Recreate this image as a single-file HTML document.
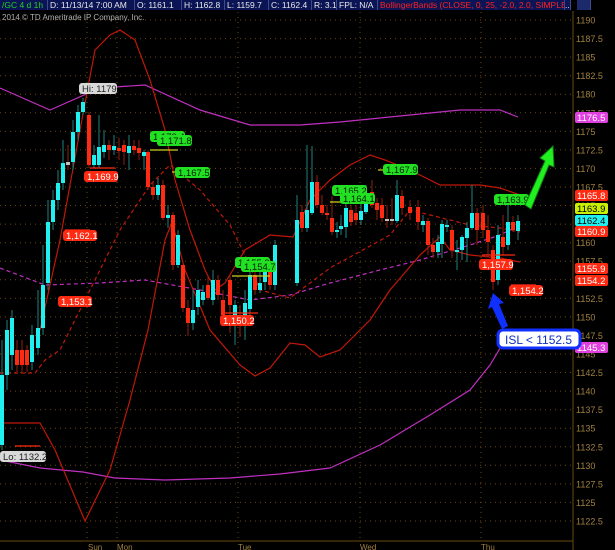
<!DOCTYPE html>
<html><head><meta charset="utf-8"><style>
html,body{margin:0;padding:0;background:#000;width:615px;height:550px;overflow:hidden}
#hdr{position:absolute;left:0;top:0;width:615px;height:11px;background:#000;font:8.5px/11px "Liberation Sans",sans-serif;color:#e8e8e8}
.c{position:absolute;top:0;height:10px;background:#0b1555;border-right:1px solid #3a4a8a;padding-left:2px;white-space:nowrap;overflow:hidden}
svg{position:absolute;left:0;top:0}
</style></head><body>
<svg id="s" width="615" height="550" xmlns="http://www.w3.org/2000/svg"></svg>
<div id="hdr">
<div class="c" style="left:0;width:45px;color:#22d022">/GC 4 d 1h</div>
<div class="c" style="left:48px;width:84px">D: 11/13/14 7:00 AM</div>
<div class="c" style="left:135px;width:44px">O: 1161.1</div>
<div class="c" style="left:182px;width:40px">H: 1162.8</div>
<div class="c" style="left:225px;width:41px">L: 1159.7</div>
<div class="c" style="left:269px;width:40px">C: 1162.4</div>
<div class="c" style="left:312px;width:22px">R: 3.1</div>
<div class="c" style="left:337px;width:38px">FPL: N/A</div>
<div class="c" style="left:378px;width:184px;color:#ff2020">BollingerBands (CLOSE, 0, 25, -2.0, 2.0, SIMPLE)</div>
<div class="c" style="left:565px;width:5px;padding:0">...</div>
<div class="c" style="left:577px;width:13px;padding:0;background:#1a2a6a"></div>
</div>
<script>
const s=document.getElementById('s');let h='';
const Y=p=>20+(1190-p)*7.422;
for(let p=1190;p>=1122.5;p-=2.5){const y=Y(p).toFixed(1);h+=`<line x1="0" y1="${y}" x2="573" y2="${y}" stroke="#6a4a10" stroke-dasharray="1,4"/>`;
h+=`<text x="576" y="${(+y+3.5).toFixed(1)}" fill="#a08040" font-size="9" font-family="Liberation Sans">${p%1?p.toFixed(1):p}</text>`;}
[87,117,238,360,481].forEach(x=>{h+=`<line x1="${x}" y1="12" x2="${x}" y2="541" stroke="#6a4a10" stroke-dasharray="1,4"/>`});
h+=`<line x1="573" y1="11" x2="573" y2="550" stroke="#6a4a10"/><line x1="0" y1="541" x2="573" y2="541" stroke="#6a4a10"/>`;
[[88,'Sun'],[117,'Mon'],[238,'Tue'],[360,'Wed'],[481,'Thu']].forEach(([x,t])=>h+=`<text x="${x}" y="550" fill="#a08040" font-size="8" font-family="Liberation Sans">${t}</text>`);
h+=`<text x="2" y="20" fill="#b0b0b0" font-size="8" font-family="Liberation Sans">2014 © TD Ameritrade IP Company, Inc.</text>`;
const L=(pts,c,w,d)=>h+=`<polyline fill="none" stroke="${c}" stroke-width="${w||1}" ${d?'stroke-dasharray="'+d+'"':''} points="${pts}"/>`;
L('0,88 50,110 100,88 145,85 200,110 250,125 300,125 340,122 380,118 460,110 500,110 518,117','#c030c0',1.2);
L('0,460 40,468 83,472 115,478 165,480 230,478 280,474 330,468 380,445 430,415 470,390 490,365 505,340 520,330','#c030c0',1.2);
L('0,268 45,285 100,283 145,280 200,290 250,300 290,295 330,283 380,270 420,260 470,245 500,235 520,225','#c030c0',1.2,'4,3');
L('0,423 40,423 55,450 85,521 110,470 130,400 148,330 165,240 172,222 185,270 210,330 240,365 255,376 270,368 290,343 305,345 320,357 340,350 370,320 390,290 420,255 440,237 450,250 470,255 500,258 520,262','#c01808',1.2);
L('40,330 60,240 80,130 95,50 110,35 120,30 135,40 150,80 165,130 175,180 190,230 205,270 215,290 225,283 245,250 270,235 293,237 310,200 330,180 350,165 370,155 385,160 410,170 440,185 480,185 500,188 520,195','#c01808',1.2);
L('0,373 35,373 45,360 60,350 90,290 120,230 150,185 170,165 200,190 230,225 245,255 260,290 290,298 330,268 390,235 410,210 430,215 470,225 500,228 520,232','#c01808',1.2,'4,3');
const C=[[2,375,445,'c',340,450],[7,330,375,'c',320,390],[12,318,355,'c',310,370],[17,350,365,'r',340,372],[22,350,365,'r',340,372],[27,350,365,'r',345,372],[32,335,362,'c',325,370],[38,328,348,'c',290,355],[43,285,328,'c',245,335],[48,222,283,'c',200,290],[53,200,222,'c',190,230],[58,183,200,'c',170,210],[63,163,183,'c',140,190],[68,162,165,'w',145,170],[73,132,162,'c',120,170],[78,112,132,'c',105,140],[83,102,112,'c',98,115],[89,115,165,'r',112,168],[94,155,165,'c',145,168],[99,147,165,'c',115,168],[104,145,152,'c',130,158],[109,145,150,'r',140,160],[114,146,150,'c',135,155],[119,148,151,'r',138,160],[124,145,152,'r',140,165],[129,146,153,'c',135,170],[134,146,150,'r',140,155],[139,148,153,'r',140,160],[144,152,156,'c',150,170],[148,152,187,'r',150,190],[153,187,195,'r',183,200],[158,185,195,'c',178,200],[163,185,218,'r',180,220],[168,215,218,'c',205,228],[173,215,265,'r',212,270],[178,235,265,'c',230,268],[183,265,308,'r',262,312],[188,308,323,'r',300,336],[193,310,323,'c',290,330],[198,290,307,'c',280,315],[203,292,300,'c',285,305],[208,285,298,'r',275,300],[213,280,300,'c',270,305],[218,280,295,'r',275,300],[223,300,315,'r',290,318],[230,280,305,'r',275,333],[235,305,321,'c',300,345],[240,315,320,'r',305,337],[245,303,322,'c',290,340],[250,275,309,'c',260,315],[255,275,290,'r',265,295],[260,283,290,'c',270,293],[265,270,282,'c',262,290],[270,265,285,'r',260,290],[275,245,285,'c',240,290],[297,220,283,'c',195,286],[302,212,228,'r',205,232],[307,210,228,'c',145,232],[312,182,213,'c',146,215],[317,182,205,'r',175,208],[322,205,213,'r',195,215],[327,213,215,'r',205,220],[332,218,232,'r',196,235],[337,230,232,'c',222,238],[341,226,229,'c',215,235],[346,208,227,'c',190,238],[351,210,222,'r',205,226],[356,213,220,'r',205,225],[361,211,220,'c',200,225],[366,202,212,'c',185,214],[372,192,205,'r',180,208],[377,203,210,'r',198,220],[382,205,218,'r',198,222],[387,219,221,'w',205,228],[392,219,221,'w',198,225],[397,195,221,'c',180,223],[402,196,208,'r',190,215],[410,207,213,'r',200,220],[418,207,222,'r',200,230],[423,221,225,'c',215,232],[428,221,245,'r',218,255],[433,245,252,'r',238,258],[438,242,252,'c',235,258],[442,224,244,'c',220,258],[447,225,227,'c',220,232],[452,230,250,'r',225,258],[457,250,252,'c',240,270],[462,237,250,'c',235,260],[467,228,238,'c',222,262],[472,213,228,'c',185,230],[477,213,230,'r',208,245],[483,213,230,'r',205,238],[488,230,242,'r',215,255],[493,250,282,'r',245,290],[498,235,280,'c',225,285],[503,237,247,'r',215,255],[508,222,245,'c',205,250],[513,222,230,'r',216,232],[518,221,231,'c',215,240]];
const col={c:'#20f0f0',r:'#ff2a12',w:'#c0c0c0'};
C.forEach(([x,t,b,c,hi,lo])=>{h+=`<line x1="${x}" y1="${hi}" x2="${x}" y2="${lo}" stroke="${c=='c'?'#208080':'#902010'}"/><rect x="${x-2}" y="${t}" width="4" height="${Math.max(b-t,1.5)}" fill="${col[c]}"/>`});
[[150,150,178,'#d0d020'],[172,172,205,'#d0d020'],[232,276,270,'#d0d020'],[330,202,370,'#d0d020'],[378,170,408,'#d0d020'],[495,202,528,'#d0d020'],[90,168,115,'#ff2a12'],[65,230,90,'#ff2a12'],[15,446,40,'#ff2a12'],[222,313,258,'#ff2a12'],[482,255,515,'#ff2a12'],[511,285,536,'#ff2a12']].forEach(([x,y,x2,c])=>h+=`<line x1="${x}" y1="${y}" x2="${x2}" y2="${y}" stroke="${c}" stroke-width="1.2"/>`);
const lab=(x,y,t,bg,fg,w)=>h+=`<rect x="${x}" y="${y}" width="${w}" height="11" rx="3" fill="${bg}"/><text x="${x+3}" y="${y+9}" fill="${fg}" font-size="9.5" font-family="Liberation Sans">${t}</text>`;
[[150,131,'1,172.4'],[157,135,'1,171.8'],[175,167,'1,167.5'],[235,257,'1,155.3'],[241,261,'1,154.7'],[332,185,'1,165.2'],[340,193,'1,164.1'],[383,164,'1,167.9'],[494,194,'1,163.9']].forEach(([x,y,t])=>lab(x,y,t,'#22e022','#002000',35));
[[84,171,'1,169.9'],[63,230,'1,162.1'],[58,296,'1,153.1'],[220,315,'1,150.2'],[479,259,'1,157.9'],[509,285,'1,154.2']].forEach(([x,y,t])=>lab(x,y,t,'#ff2a12','#fff',34));
lab(79,83,'Hi: 1179','#d8d8d8','#222',38);lab(0,451,'Lo: 1132.2','#d8d8d8','#222',46);
[[117,'1176.5','#e040e0'],[195,'1165.8','#ff2a12'],[208,'1163.9','#c8f000'],[220,'1162.4','#20f0f0'],[231,'1160.9','#ff2a12'],[268,'1155.9','#ff2a12'],[280,'1154.2','#ff2a12'],[347,'1145.3','#e040e0']].forEach(([y,t,c])=>{h+=`<rect x="575" y="${y-5}" width="33" height="11" rx="2" fill="${c}"/><text x="577" y="${y+4}" fill="${c=='#c8f000'||c=='#20f0f0'?'#000':'#fff'}" font-size="9.5" font-family="Liberation Sans">${t}</text>`});
h+=`<polygon points="525,205 531,209 549,165 554,167 553,146 540,158 545,161 " fill="#20f020" stroke="#108010"/>`;
h+=`<polygon points="508,326 502,329 492,307 488,309 493,293 504,303 499,304" fill="#1030ff"/>`;
h+=`<rect x="498" y="330" width="82" height="18" rx="5" fill="#fff" stroke="#1030ff" stroke-width="3"/><text x="505" y="344" fill="#1030c0" font-size="12" font-family="Liberation Sans">ISL &lt; 1152.5</text>`;
s.innerHTML=h;
</script>
</body></html>
